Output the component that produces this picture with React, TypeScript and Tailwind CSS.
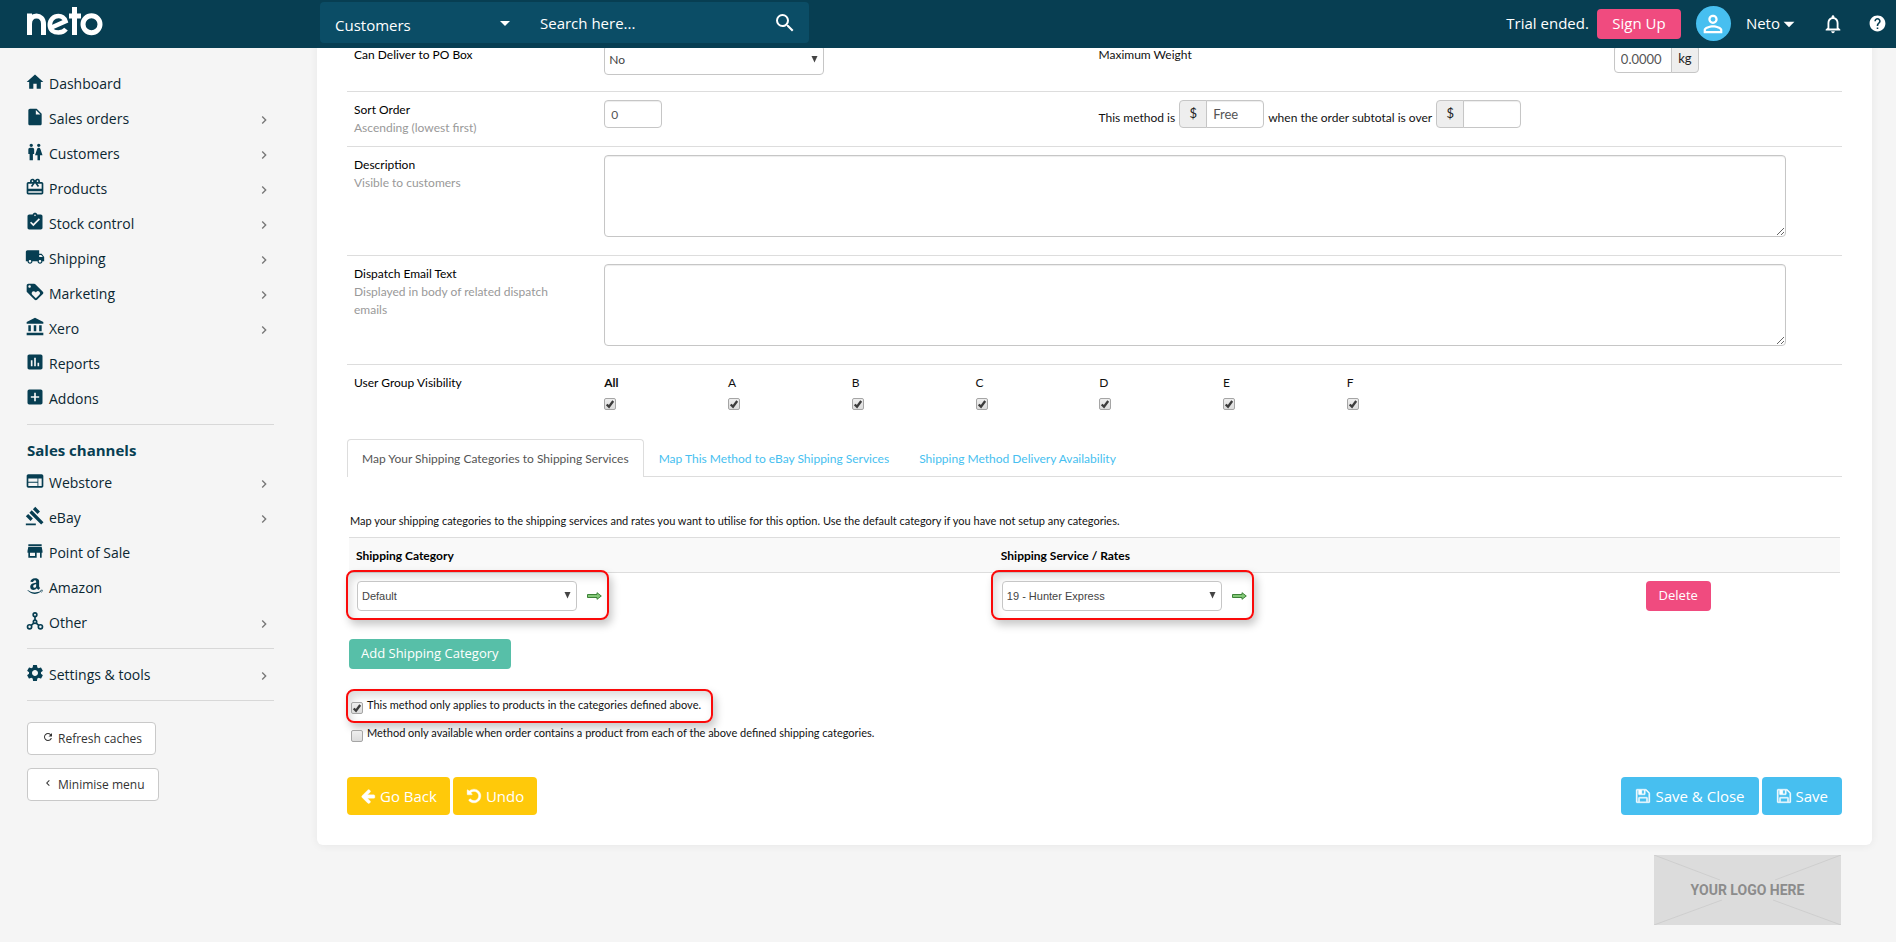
import React from "react";
import {
  MdHome, MdInsertDriveFile, MdWc, MdCardGiftcard, MdAssignmentTurnedIn, MdLocalShipping, MdLoyalty,
  MdAccountBalance, MdAssessment, MdAddBox, MdWeb, MdGavel, MdStore, MdSettings, MdRefresh,
  MdChevronLeft, MdChevronRight, MdSearch, MdNotificationsNone, MdHelp, MdPersonOutline, MdArrowDropDown,
} from "react-icons/md";
import { FaAmazon } from "react-icons/fa";

type IconType = React.ComponentType<{ className?: string }>;

const Logo = () => (
  <svg className="h-[30px] w-[76px]" viewBox="0 0 76 30" fill="none" stroke="#fff" strokeWidth="5" aria-label="neto" role="img">
    <path d="M2.500 28V6.500M2.500 17C2.500 11.500 6 9 9.500 9S16.500 11.500 16.500 17V28" />
    <path d="M24.500 20.500L38.500 14.200C37.300 10.800 34.800 9 31.500 9C26.500 9 22.800 13 22.800 18S26.500 25.500 31.500 25.500C34.800 25.500 37.300 24.500 39 22.200" strokeWidth="4.500" />
    <path d="M47.500 0V28M42 9H54" />
    <circle cx="64.500" cy="17.300" r="8.500" />
  </svg>
);

const NodesIcon: IconType = ({ className }) => (
  <svg className={className} viewBox="0 0 24 24" fill="none" stroke="currentColor" strokeWidth="2" aria-hidden="true">
    <circle cx="12" cy="4.500" r="2.200" />
    <circle cx="12" cy="13" r="2" />
    <circle cx="5.500" cy="19" r="2.500" />
    <circle cx="18.500" cy="19" r="2.500" />
    <path d="M12 6.500V11M10.500 14.500L7.500 17.300M13.500 14.500L16.500 17.300" />
  </svg>
);

const AmazonIcon: IconType = ({ className }) => <FaAmazon className={className + " p-px"} />;

const faPaths = {
  save: "M512 1536h768v-384h-768v384zm896 0h128v-896q0-14-10-38.500t-20-34.500l-281-281q-10-10-34-20t-39-10v416q0 40-28 68t-68 28h-576q-40 0-68-28t-28-68v-416h-128v1280h128v-416q0-40 28-68t68-28h832q40 0 68 28t28 68v416zm-384-928v-320q0-13-9.500-22.500t-22.500-9.500h-192q-13 0-22.500 9.500t-9.500 22.500v320q0 13 9.500 22.500t22.500 9.500h192q13 0 22.500-9.500t9.500-22.500zm640 32v928q0 40-28 68t-68 28h-1344q-40 0-68-28t-28-68v-1344q0-40 28-68t68-28h928q40 0 88 20t76 48l280 280q28 28 48 76t20 88z",
  back: "M1664 896v128q0 53-32.500 90.500t-84.500 37.500h-704l293 294q38 36 38 90t-38 90l-75 76q-37 37-90 37-52 0-91-37l-651-652q-37-37-37-90 0-52 37-91l651-650q38-38 91-38 52 0 90 38l75 74q38 38 38 91t-38 91l-293 293h704q52 0 84.500 37.500t32.500 90.500z",
  undo: "M1664 896q0 156-61 298t-164 245-245 164-298 61q-172 0-327-72.500t-264-204.500q-7-10-6.500-22.500t8.500-20.500l137-138q10-9 25-9 16 2 23 12 73 95 179 147t225 52q104 0 198.500-40.500t163.500-109.500 109.500-163.500 40.500-198.500-40.500-198.500-109.500-163.500-163.500-109.500-198.500-40.500q-98 0-188 35.500t-160 101.500l137 138q31 30 14 69-17 40-59 40h-448q-26 0-45-19t-19-45v-448q0-42 40-59 39-17 69 14l130 129q107-101 244.500-156.500t284.500-55.500q156 0 298 61t245 164 164 245 61 298z",
};

const ActionIcon = ({ name }: { name: keyof typeof faPaths }) => (
  <svg className="size-4" viewBox="0 0 1792 1792" fill="currentColor" stroke="currentColor" strokeWidth="40" aria-hidden="true">
    <path d={faPaths[name]} />
  </svg>
);

const GreenArrow = () => (
  <svg className="h-2 w-[15px]" viewBox="0 0 15 8" aria-hidden="true">
    <path d="M.5 2.500H10V.7L14.300 4L10 7.300V5.500H.5Z" fill="#83c877" stroke="#3d8238" strokeWidth="1" />
  </svg>
);

function Check({ id, label, checked }: { id: string; label?: string; checked?: boolean }) {
  return (
    <span className="relative block size-3 shrink-0">
      <input
        id={id}
        type="checkbox"
        defaultChecked={checked}
        aria-label={label}
        className="peer block size-3 appearance-none rounded-[2px] border border-[#a5a5a5] bg-linear-to-b from-[#eeeeee] to-[#dcdcdc]"
      />
      <svg className="pointer-events-none absolute inset-0 hidden size-3 peer-checked:block" viewBox="0 0 12 12" aria-hidden="true">
        <path d="M2.700 6.500L5 8.700L9.200 3" fill="none" stroke="#3c3c3c" strokeWidth="2.300" />
      </svg>
    </span>
  );
}

function Select({ id, value, label, arial }: { id: string; value: string; label: string; arial?: boolean }) {
  return (
    <span className="relative block w-[220px] shrink-0">
      <select
        id={id}
        aria-label={label}
        className={
          "block h-[30px] w-full appearance-none rounded border border-[#c6c6c6] bg-white px-1 text-[#444] " +
          (arial ? "font-['Liberation_Sans',sans-serif] text-[11px]" : "text-xs")
        }
      >
        <option>{value}</option>
      </select>
      <svg className="pointer-events-none absolute right-1.5 top-[11px] h-[7px] w-[7px]" viewBox="0 0 7 7" aria-hidden="true">
        <path d="M.5 0H6.500L3.500 6.500Z" fill="#444" />
      </svg>
    </span>
  );
}

const inputBase = "h-7 w-[58px] border border-[#c6c6c6] bg-white px-1.5 text-[#555] shadow-[inset_0_1px_1px_rgba(0,0,0,0.075)]";
const addonBase = "flex h-7 w-7 items-center justify-center border border-[#c6c6c6] bg-[#eeeeee] text-[13px] text-[#222]";

function MoneyInput({ label, value }: { label: string; value?: string }) {
  return (
    <span className="flex">
      <span className={addonBase + " rounded-l"}>$</span>
      <input aria-label={label} defaultValue={value} className={inputBase + " -ml-px rounded-r text-[13px]"} />
    </span>
  );
}

function NavItem({ icon: Icon, label, more }: { icon: IconType; label: string; more?: boolean }) {
  return (
    <li>
      <a href="#" className="flex h-[35px] items-center text-sm text-[#0b2732]">
        <Icon className="mr-1 -ml-0.5 mb-1 size-5 shrink-0 text-[#073e52]" />
        <span className="grow pt-px">{label}</span>
        {more && <MdChevronRight className="mt-0.5 mr-0.5 size-4 text-[#777]" />}
      </a>
    </li>
  );
}

const mainNav: [IconType, string, boolean][] = [
  [MdHome, "Dashboard", false],
  [MdInsertDriveFile, "Sales orders", true],
  [MdWc, "Customers", true],
  [MdCardGiftcard, "Products", true],
  [MdAssignmentTurnedIn, "Stock control", true],
  [MdLocalShipping, "Shipping", true],
  [MdLoyalty, "Marketing", true],
  [MdAccountBalance, "Xero", true],
  [MdAssessment, "Reports", false],
  [MdAddBox, "Addons", false],
];

const channelNav: [IconType, string, boolean][] = [
  [MdWeb, "Webstore", true],
  [MdGavel, "eBay", true],
  [MdStore, "Point of Sale", false],
  [AmazonIcon, "Amazon", false],
  [NodesIcon, "Other", true],
];

function Header() {
  return (
    <header className="sticky top-0 z-20 flex h-12 items-start bg-[#073e52] text-white">
      <a href="#" className="block w-[320px] shrink-0 pl-[27px] pt-[7px]"><Logo /></a>
      <form className="mt-0.5 flex h-[41px] w-[489px] items-center rounded bg-[#0b4d66]">
        <span className="relative block w-[204px]">
          <select aria-label="Search in" className="h-[41px] w-full appearance-none pl-[15px] pt-1.5 text-[15px]">
            <option>Customers</option>
          </select>
          <MdArrowDropDown className="pointer-events-none absolute right-[7px] top-[9px] size-6" />
        </span>
        <input aria-label="Search" placeholder="Search here..." className="h-full min-w-0 grow bg-transparent px-4 text-[15px] placeholder:text-white" />
        <button type="button" aria-label="Search" className="mr-3 flex"><MdSearch className="size-6" /></button>
      </form>
      <div className="ml-auto flex h-[47px] items-center pr-[9px] text-[15px]">
        <span>Trial ended.</span>
        <button type="button" className="ml-2 h-[30px] w-[84px] rounded bg-[#f04b7f]">Sign Up</button>
        <span className="ml-[15px] flex size-[35px] items-center justify-center rounded-full bg-[#47bff0]">
          <MdPersonOutline className="size-7" />
        </span>
        <button type="button" className="ml-[15px] flex items-center">
          Neto
          <MdArrowDropDown className="-mx-1 size-[26px]" />
        </button>
        <button type="button" aria-label="Notifications" className="ml-6"><MdNotificationsNone className="size-[22px]" /></button>
        <button type="button" aria-label="Help" className="ml-6"><MdHelp className="size-[19px]" /></button>
      </div>
    </header>
  );
}

const sideButton = "flex h-[33px] items-center gap-1 rounded border border-[#c9c9c9] bg-white pr-[13px] pl-3.5 text-xs text-[#333]";

function Sidebar() {
  return (
    <nav className="w-[317px] shrink-0 pl-[27px] pr-[43px] pt-[18px]">
      <ul>{mainNav.map(([icon, label, more]) => <NavItem key={label} icon={icon} label={label} more={more} />)}</ul>
      <hr className="mt-2 border-[#d8d8d8]" />
      <h2 className="mt-[13px] pb-[3px] text-[15px] leading-6 font-bold text-[#073e52]">Sales channels</h2>
      <ul>{channelNav.map(([icon, label, more]) => <NavItem key={label} icon={icon} label={label} more={more} />)}</ul>
      <hr className="my-2 border-[#d8d8d8]" />
      <ul><NavItem icon={MdSettings} label="Settings & tools" more /></ul>
      <hr className="mt-2 border-[#d8d8d8]" />
      <div className="mt-[21px] flex flex-col items-start gap-[13px]">
        <button type="button" className={sideButton}><MdRefresh className="mb-1 size-3" />Refresh caches</button>
        <button type="button" className={sideButton}><MdChevronLeft className="mb-1 size-3" />Minimise menu</button>
      </div>
    </nav>
  );
}

function FieldLabel({ title, hint, htmlFor }: { title: string; hint?: string; htmlFor?: string }) {
  return (
    <div className="pt-px pr-10 pl-[7px] leading-[18px]">
      <label htmlFor={htmlFor} className="block text-black">{title}</label>
      {hint && <p className="text-[#999]">{hint}</p>}
    </div>
  );
}

const row = "grid grid-cols-[257fr_494fr_515fr_228fr] items-start border-[#ddd] pt-2";
const textareaClass = "block h-[82px] w-[95.5%] resize rounded border border-[#c6c6c6] bg-white shadow-[inset_0_1px_1px_rgba(0,0,0,0.075)]";
const highlight = "relative rounded-lg border-2 border-[#fa0a0a] shadow-[3px_5px_8px_rgba(0,0,0,0.22),inset_3px_5px_8px_rgba(0,0,0,0.14)]";
const groups = ["All", "A", "B", "C", "D", "E", "F"];

function RateCell({ id, label, value }: { id: string; label: string; value: string }) {
  return (
    <td className="p-0 align-top">
      <div className={"-mt-[3px] -ml-[3px] flex h-[50px] w-[263px] items-center gap-2.5 pt-0.5 pl-[9px] " + highlight}>
        <Select id={id} label={label} value={value} arial />
        <GreenArrow />
      </div>
    </td>
  );
}

function Panel() {
  return (
    <section className="-mt-3 rounded-md bg-white px-[30px] pt-px pb-[30px] shadow-[0_1px_8px_rgba(0,0,0,0.06)]">
      <div className={row + " h-[54px]"}>
        <FieldLabel title="Can Deliver to PO Box" htmlFor="pobox" />
        <Select id="pobox" label="Can Deliver to PO Box" value="No" />
        <label htmlFor="maxw" className="pt-px leading-[18px]">Maximum Weight</label>
        <span className="flex">
          <input id="maxw" defaultValue="0.0000" className={inputBase + " rounded-l text-[13px]"} />
          <span className={addonBase + " -ml-px rounded-r"}>kg</span>
        </span>
      </div>

      <div className={row + " h-[55px] border-t"}>
        <FieldLabel title="Sort Order" hint="Ascending (lowest first)" htmlFor="sort" />
        <span><input id="sort" defaultValue="0" className={inputBase + " block rounded text-xs"} /></span>
        <div className="col-span-2 flex items-center gap-1">
          <span className="pt-2">This method is</span>
          <MoneyInput label="Method price" value="Free" />
          <span className="pt-2">when the order subtotal is over</span>
          <MoneyInput label="Order subtotal" />
        </div>
      </div>

      <div className={row + " h-[109px] border-t"}>
        <FieldLabel title="Description" hint="Visible to customers" htmlFor="desc" />
        <div className="col-span-3"><textarea id="desc" className={textareaClass} /></div>
      </div>

      <div className={row + " h-[109px] border-t"}>
        <FieldLabel title="Dispatch Email Text" hint="Displayed in body of related dispatch emails" htmlFor="dispatch" />
        <div className="col-span-3"><textarea id="dispatch" className={textareaClass} /></div>
      </div>

      <div className={row + " h-[75px] border-t"}>
        <FieldLabel title="User Group Visibility" />
        <div className="col-span-3 grid grid-cols-10 pt-px">
          {groups.map((g, i) => (
            <div key={g}>
              <label htmlFor={"group-" + g} className={i === 0 ? "block leading-[18px] font-bold" : "block leading-[18px]"}>{g}</label>
              <div className="pt-1.5"><Check id={"group-" + g} checked /></div>
            </div>
          ))}
        </div>
      </div>

      <div role="tablist" className="flex h-[38px] border-b border-[#ddd]">
        <button role="tab" aria-selected="true" type="button" className="-mb-px h-[38px] rounded-t border border-b-0 border-[#ddd] bg-white px-3.5 pt-px text-[#555]">Map Your Shipping Categories to Shipping Services</button>
        <button role="tab" aria-selected="false" type="button" className="px-[15px] pt-0.5 text-[#47bff0]">Map This Method to eBay Shipping Services</button>
        <button role="tab" aria-selected="false" type="button" className="px-[15px] pt-0.5 text-[#47bff0]">Shipping Method Delivery Availability</button>
      </div>

      <div className="px-0.5 pt-[35px]">
        <p className="pb-[7px] pl-px text-[11px] leading-[18px]">
          Map your shipping categories to the shipping services and rates you want to utilise for this option. Use the default category if you have not setup any categories.
        </p>
        <table className="w-full table-fixed border-collapse text-left">
          <thead>
            <tr className="h-[35px] border-y border-[#ddd] bg-[#f9f9f9]">
              <th className="w-[43.25%] px-[7px] pt-0.5 font-bold text-black">Shipping Category</th>
              <th className="w-[43.25%] px-[7px] pt-0.5 font-bold text-black">Shipping Service / Rates</th>
              <th aria-label="Actions" />
            </tr>
          </thead>
          <tbody>
            <tr>
              <RateCell id="category" label="Shipping Category" value="Default" />
              <RateCell id="service" label="Shipping Service / Rates" value="19 - Hunter Express" />
              <td className="px-[7px] pt-2 align-top">
                <button type="button" className="block h-[30px] w-[65px] rounded bg-[#f04b7f] font-['Open_Sans',sans-serif] text-[13px] text-white">Delete</button>
              </td>
            </tr>
          </tbody>
        </table>
        <button type="button" className="mt-[19px] block h-[30px] rounded bg-[#57bfa8] px-3 font-['Open_Sans',sans-serif] text-[13px] text-white">Add Shipping Category</button>
        <div className={"mt-5 -ml-[3px] flex h-[34px] w-[367px] items-start gap-1 pt-[5px] pl-[3px] " + highlight}>
          <span className="pt-1.5"><Check id="only" checked /></span>
          <label htmlFor="only" className="text-[11px] leading-[18px]">This method only applies to products in the categories defined above.</label>
        </div>
        <div className="flex items-start gap-1 pt-px pl-0.5">
          <span className="pt-1.5"><Check id="each" /></span>
          <label htmlFor="each" className="text-[11px] leading-[18px]">Method only available when order contains a product from each of the above defined shipping categories.</label>
        </div>
      </div>

      <div className="mt-[35px] flex gap-[3px] font-['Open_Sans',sans-serif] text-[15px] text-white">
        <button type="button" className="flex h-[38px] items-center gap-1 rounded bg-[#ffc90a] px-[13px]"><ActionIcon name="back" />Go Back</button>
        <button type="button" className="flex h-[38px] items-center gap-1 rounded bg-[#ffc90a] px-[13px]"><ActionIcon name="undo" />Undo</button>
        <span className="grow" />
        <button type="button" className="flex h-[38px] items-center gap-1 rounded bg-[#47bff0] px-3.5"><ActionIcon name="save" />Save &amp; Close</button>
        <button type="button" className="flex h-[38px] items-center gap-1 rounded bg-[#47bff0] px-3.5"><ActionIcon name="save" />Save</button>
      </div>
    </section>
  );
}

export default function App() {
  return (
    <div className="min-h-screen bg-[#f5f5f5] font-['Open_Sans',sans-serif] text-[#111]">
      <Header />
      <div className="flex">
        <Sidebar />
        <main className="min-w-0 grow pr-6 font-['Lato',sans-serif] text-xs">
          <Panel />
          <div className="flex justify-end pt-2.5 pr-[31px] pb-[17px]">
            <div className="relative flex h-[70px] w-[187px] items-center justify-center bg-[#dcdcdc]">
              <svg className="absolute inset-0 size-full" viewBox="0 0 187 70" aria-hidden="true">
                <path d="M0 0L66 25M187 0L121 25M0 70L68 45M187 70L119 45" stroke="#cecece" fill="none" />
              </svg>
              <span className="relative font-['Roboto',sans-serif] text-sm font-bold text-[#8c8c8c]">YOUR LOGO HERE</span>
            </div>
          </div>
        </main>
      </div>
    </div>
  );
}
